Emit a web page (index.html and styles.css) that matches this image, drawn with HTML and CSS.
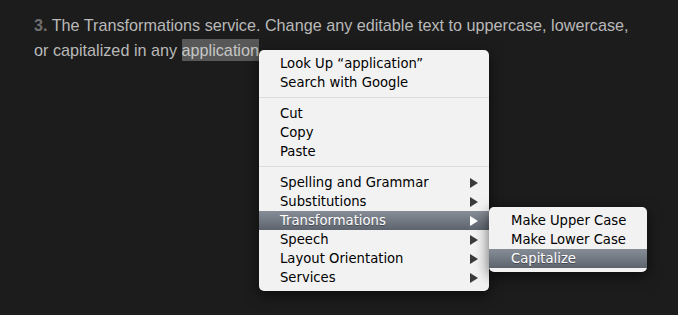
FILE: index.html
```html
<!DOCTYPE html>
<html lang="en">
<head>
    <meta charset="UTF-8">
    <title>Transformations</title>
    <link rel="stylesheet" href="styles.css">
</head>
<body>

<p class="step"><b>3.</b> The Transformations service. Change any editable text to uppercase, lowercase,<br>or capitalized in any <span class="selected">application</span></p>

<div class="menu main-menu">
    <div class="item">Look Up “application”</div>
    <div class="item">Search with Google</div>
    <div class="sep"></div>
    <div class="item">Cut</div>
    <div class="item">Copy</div>
    <div class="item">Paste</div>
    <div class="sep"></div>
    <div class="item sub">Spelling and Grammar<span class="arrow"></span></div>
    <div class="item sub">Substitutions<span class="arrow"></span></div>
    <div class="item sub active">Transformations<span class="arrow"></span></div>
    <div class="item sub">Speech<span class="arrow"></span></div>
    <div class="item sub">Layout Orientation<span class="arrow"></span></div>
    <div class="item sub">Services<span class="arrow"></span></div>
</div>

<div class="menu sub-menu">
    <div class="item">Make Upper Case</div>
    <div class="item">Make Lower Case</div>
    <div class="item active">Capitalize</div>
</div>

</body>
</html>
```

FILE: styles.css
```css
body {
    margin: 0;
    background-color: #1c1c1c;
    font-family: 'Liberation Sans', Arial, sans-serif;
    height: 315px;
    overflow: hidden;
}
.step {
    margin: 0;
    padding: 13px 10px 0 34px;
    font-size: 16.2px;
    line-height: 25px;
    color: #b9b9b9;
    white-space: nowrap;
}
.step b {
    color: #6f6f6f;
}
.selected {
    background-color: #585858;
    color: #c6c6c6;
    padding: 2px 0 2px 0;
}
.menu {
    position: absolute;
    background-color: #f2f2f2;
    border-radius: 5px;
    padding: 4px 0;
    font-family: 'DejaVu Sans', sans-serif;
    font-size: 13.2px;
    color: #000;
    box-shadow: 0 4px 14px rgba(0, 0, 0, 0.6);
}
.main-menu {
    left: 259px;
    top: 50px;
    width: 230px;
}
.sub-menu {
    left: 489px;
    top: 207px;
    width: 158px;
}
.item {
    height: 19px;
    line-height: 19px;
    padding: 0 11px 0 21px;
    display: flex;
    justify-content: space-between;
    align-items: center;
}
.sub-menu .item {
    padding-left: 22px;
}
.sep {
    height: 1px;
    background-color: #dcdcdc;
    margin: 5px 0 6px 0;
}
.arrow {
    width: 0;
    height: 0;
    border-top: 5px solid transparent;
    border-bottom: 5px solid transparent;
    border-left: 8px solid #3a3a3a;
}
.active {
    background: linear-gradient(#878d97, #5e646e);
    color: #fff;
    text-shadow: 0 1px 0 rgba(0, 0, 0, 0.35);
}
.active .arrow {
    border-left-color: #fff;
}
```
